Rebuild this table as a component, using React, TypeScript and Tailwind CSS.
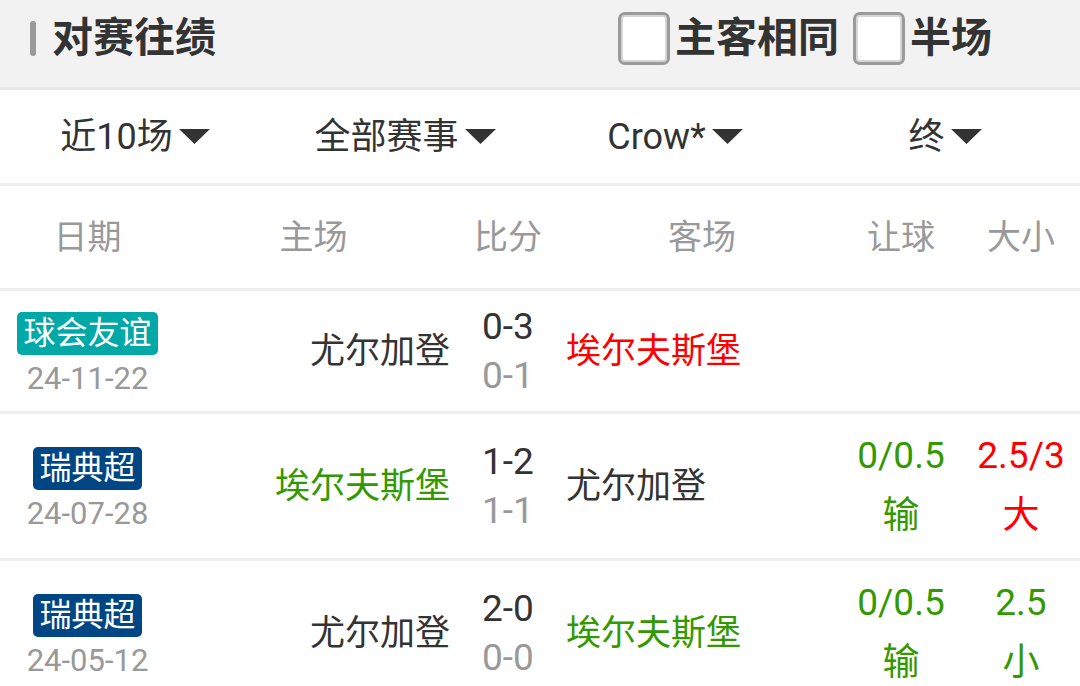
import React from "react";

type Row = {
  league: string;
  leagueColor: string;
  date: string;
  home: string;
  homeColor: string;
  score: string;
  half: string;
  away: string;
  awayColor: string;
  hcap?: string;
  hcapResult?: string;
  hcapColor?: string;
  ou?: string;
  ouResult?: string;
  ouColor?: string;
  tall?: boolean;
};

const rows: Row[] = [
  {
    league: "球会友谊",
    leagueColor: "bg-[#00a8a8]",
    date: "24-11-22",
    home: "尤尔加登",
    homeColor: "text-[#333333]",
    score: "0-3",
    half: "0-1",
    away: "埃尔夫斯堡",
    awayColor: "text-[#ff0000]",
  },
  {
    league: "瑞典超",
    leagueColor: "bg-[#004685]",
    date: "24-07-28",
    home: "埃尔夫斯堡",
    homeColor: "text-[#339900]",
    score: "1-2",
    half: "1-1",
    away: "尤尔加登",
    awayColor: "text-[#333333]",
    hcap: "0/0.5",
    hcapResult: "输",
    hcapColor: "text-[#339900]",
    ou: "2.5/3",
    ouResult: "大",
    ouColor: "text-[#ff0000]",
    tall: true,
  },
  {
    league: "瑞典超",
    leagueColor: "bg-[#004685]",
    date: "24-05-12",
    home: "尤尔加登",
    homeColor: "text-[#333333]",
    score: "2-0",
    half: "0-0",
    away: "埃尔夫斯堡",
    awayColor: "text-[#339900]",
    hcap: "0/0.5",
    hcapResult: "输",
    hcapColor: "text-[#339900]",
    ou: "2.5",
    ouResult: "小",
    ouColor: "text-[#339900]",
    tall: true,
  },
];

const cols = "grid grid-cols-[175px_283px_100px_282px_122px_118px]";

function Checkbox({ label }: { label: string }) {
  return (
    <div className="flex items-center">
      <div className="w-[52px] h-[53px] rounded-[7px] border-[3px] border-[#9a9a9a] bg-white shadow-[inset_0_0_0_2px_#d6d6d6]" />
      <span className="ml-[5px] text-[41px] font-bold text-[#333333] leading-none">{label}</span>
    </div>
  );
}

function Filter({ label }: { label: string }) {
  return (
    <div className="flex items-center justify-center">
      <span className="text-[36px] text-[#333333] leading-none">{label}</span>
      <svg width="31" height="15" viewBox="0 0 31 15" className="ml-[6px]">
        <path d="M0 0 H31 L15.5 15 Z" fill="#333333" />
      </svg>
    </div>
  );
}

function App() {
  return (
    <div
      className="w-[1080px] h-[686px] overflow-hidden bg-white"
      style={{ fontFamily: 'Roboto, "Noto Sans", "Noto Sans CJK SC", sans-serif' }}
    >
      {/* header */}
      <div className="h-[87px] bg-[#f2f2f2] flex items-center pl-[30px] pr-[88px] pb-[10px]">
        <div className="w-[6px] h-[35px] rounded-full bg-[#9a9a9a]" />
        <span className="ml-[16px] text-[41px] font-bold text-[#333333] leading-none">对赛往绩</span>
        <div className="flex-1" />
        <div className="flex items-center gap-[14px]">
          <Checkbox label="主客相同" />
          <Checkbox label="半场" />
        </div>
      </div>
      <div className="h-[3px] bg-[#e8e8e8]" />

      {/* filters */}
      <div className="h-[93px] grid grid-cols-4">
        <Filter label="近10场" />
        <Filter label="全部赛事" />
        <Filter label="Crow*" />
        <Filter label="终" />
      </div>
      <div className="h-[3px] bg-[#efefef]" />

      {/* column titles */}
      <div className={`${cols} h-[102px] items-center text-[34px] text-[#999999] leading-none`}>
        <div className="text-center">日期</div>
        <div className="text-center pr-[6px]">主场</div>
        <div className="text-center">比分</div>
        <div className="text-center pl-[6px]">客场</div>
        <div className="text-center">让球</div>
        <div className="text-center">大小</div>
      </div>
      <div className="h-[3px] bg-[#efefef]" />

      {rows.map((r, i) => (
        <div key={i}>
          <div className={`${cols} ${r.tall ? "h-[144px]" : "h-[120px]"} items-center`}>
            <div className="flex flex-col items-center pt-[6px]">
              <div className={`${r.leagueColor} rounded-[5px] h-[43px] px-[6px] flex items-center text-white text-[32px] leading-none`}>
                {r.league}
              </div>
              <div className="mt-[6px] text-[31px] text-[#999999] leading-[36px]">{r.date}</div>
            </div>
            <div className={`text-right pr-[8px] text-[35px] leading-none ${r.homeColor}`}>{r.home}</div>
            <div className="flex flex-col items-center text-[37px]">
              <span className="text-[#333333] leading-[49px]">{r.score}</span>
              <span className="text-[#999999] leading-[49px]">{r.half}</span>
            </div>
            <div className={`pl-[8px] text-[35px] leading-none ${r.awayColor}`}>{r.away}</div>
            <div className={`flex flex-col items-center text-[37px] ${r.hcapColor ?? ""}`}>
              {r.hcap && (
                <>
                  <span className="leading-[60px]">{r.hcap}</span>
                  <span className="leading-[60px]">{r.hcapResult}</span>
                </>
              )}
            </div>
            <div className={`flex flex-col items-center text-[37px] ${r.ouColor ?? ""}`}>
              {r.ou && (
                <>
                  <span className="leading-[60px]">{r.ou}</span>
                  <span className="leading-[60px]">{r.ouResult}</span>
                </>
              )}
            </div>
          </div>
          <div className="h-[3px] bg-[#efefef]" />
        </div>
      ))}
    </div>
  );
}

export default App;
